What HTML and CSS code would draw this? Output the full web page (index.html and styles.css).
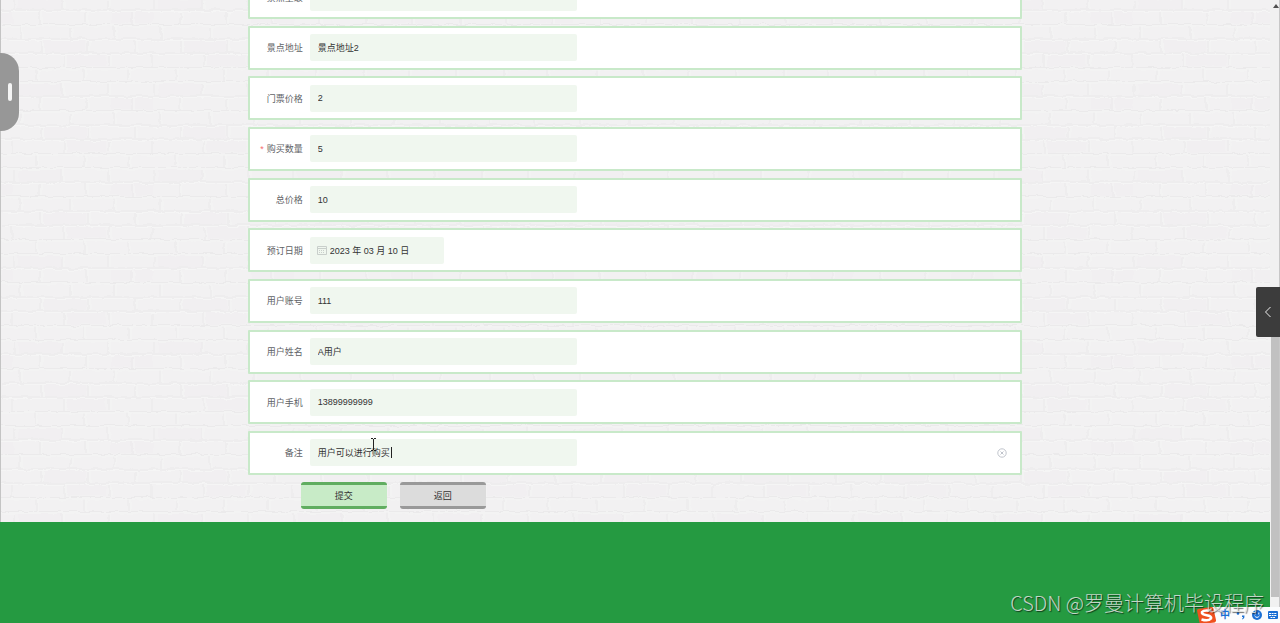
FILE: index.html
```
<!DOCTYPE html>
<html lang="zh-CN">
<head>
    <meta charset="UTF-8">
    <title>景点预订</title>
    <link rel="stylesheet" href="styles.css">
</head>
<body>
    <svg class="wall" aria-hidden="true">
        <defs>
            <filter id="rough" x="0" y="0" width="100%" height="100%">
                <feTurbulence type="fractalNoise" baseFrequency="0.09" numOctaves="3" seed="4" result="noise"/>
                <feDisplacementMap in="SourceGraphic" in2="noise" scale="5"/>
            </filter>
            <pattern id="bricks" width="140" height="86" patternUnits="userSpaceOnUse" patternTransform="translate(15 -4)">
                <rect width="140" height="86" fill="#f2f1f2"/>
                <path fill="#f1eff1" d="M2 2h44v11h-44zM95 16h42v11h-42zM28 45h42v11h-42zM50 59h40v11h-40z"/>
                <path fill="none" stroke="#ebeaeb" d="M0 14h140M0 28.500h140M0 43h140M0 57h140M0 71.500h140M0 85.500h140M46 2v11M92 1v12M138 2v11M24 16v12M70 16v11M116 16v12M4 30v12M54 31v11M98 30v12M25 45v11M72 44v12M119 45v11M48 59v12M93 59v11M136 59v12M20 73v11M68 73v12M112 73v11"/>
                <path fill="none" stroke="#f5f5f5" d="M0 15.500h140M0 30h140M0 44.500h140M0 58.500h140M0 73h140M0 1h140M48 2v11M94 1v12M26 16v12M72 16v11M118 16v12M6 30v12M56 31v11M100 30v12M27 45v11M74 44v12M121 45v11M50 59v12M95 59v11M22 73v11M70 73v12M114 73v11"/>
            </pattern>
        </defs>
        <rect width="100%" height="100%" fill="url(#bricks)" filter="url(#rough)"/>
    </svg>

    <main class="page">
        <form class="order-form">
            <div class="rows">
                <div class="row">
                    <label for="level">景点星级</label>
                    <input type="text" id="level" value="A">
                </div>
                <div class="row">
                    <label for="address">景点地址</label>
                    <input type="text" id="address" value="景点地址2">
                </div>
                <div class="row">
                    <label for="price">门票价格</label>
                    <input type="text" id="price" value="2">
                </div>
                <div class="row">
                    <label for="count"><span class="required">*</span>购买数量</label>
                    <input type="text" id="count" value="5">
                </div>
                <div class="row">
                    <label for="total">总价格</label>
                    <input type="text" id="total" value="10">
                </div>
                <div class="row">
                    <label for="date">预订日期</label>
                    <div class="date-box">
                        <svg class="calendar" viewBox="0 0 10 10" fill="none" stroke="#c9cfcb">
                            <path d="M.5 1.500h9v8h-9zM.5 3.500h9"/>
                            <path d="M2 5.500h6M2 7.500h6" stroke-dasharray="1 1"/>
                        </svg>
                        <input type="text" id="date" value="2023 年 03 月 10 日">
                    </div>
                </div>
                <div class="row">
                    <label for="account">用户账号</label>
                    <input type="text" id="account" value="111">
                </div>
                <div class="row">
                    <label for="name">用户姓名</label>
                    <input type="text" id="name" value="A用户">
                </div>
                <div class="row">
                    <label for="phone">用户手机</label>
                    <input type="text" id="phone" value="13899999999">
                </div>
                <div class="row">
                    <label for="remark">备注</label>
                    <div class="remark-box">
                        <input type="text" id="remark" value="用户可以进行购买">
                        <span class="caret"></span>
                        <svg class="ibeam" viewBox="0 0 7 13" fill="none" stroke="#222">
                            <path d="M1 .5h2M4 .5h2M3.500 1v11M1 12.500h2M4 12.500h2"/>
                        </svg>
                    </div>
                    <button type="button" class="clear" aria-label="清空">
                        <svg viewBox="0 0 10 10" fill="none" stroke="#c0c4cc">
                            <circle cx="5" cy="5" r="4.200"/>
                            <path d="M3.500 3.500l3 3M6.500 3.500l-3 3"/>
                        </svg>
                    </button>
                </div>
            </div>
            <div class="actions">
                <button type="submit" class="btn btn-submit">提交</button>
                <button type="button" class="btn btn-back">返回</button>
            </div>
        </form>
        <footer class="footer"></footer>
    </main>

    <div class="scrollbar">
        <svg class="arrow" viewBox="0 0 6 4"><path d="M3 0l3 4H0z" fill="#505050"/></svg>
        <div class="thumb"></div>
    </div>

    <div class="side-handle"><span></span></div>
    <button type="button" class="drawer" aria-label="展开">
        <svg viewBox="0 0 8 12" fill="none" stroke="#eee"><path d="M6.500 1L1.500 6l5 5"/></svg>
    </button>

    <div class="ime">
        <svg class="sogou" viewBox="0 0 20 17">
            <path d="M1 3.500Q1 2 3 1.700L15 0q2-.2 2.400 1.500L20 13q.2 2-1.500 2.500L6 17q-2 .2-2.500-1.500z" fill="#f0501e"/>
            <path d="M15.500 4Q8 2.500 6 5q-.8 2.500 4.500 3.200Q16 9 15 11.500 12.500 14.500 5.500 12.500" fill="none" stroke="#fff" stroke-width="2.600"/>
        </svg>
        <span class="ime-lang">中</span>
        <svg class="ime-icon" viewBox="0 0 10 10" fill="#1a6fd4">
            <circle cx="2" cy="3.500" r="1.300"/>
            <path d="M6 5.500h2.500q.5 2.500-2 4l-.5-.7q1.200-.8 1-1.800h-1z"/>
        </svg>
        <svg class="ime-icon" viewBox="0 0 10 10">
            <circle cx="5" cy="5" r="5" fill="#1a6fd4"/>
            <path d="M3.200 2.500v2M6.800 2.500v2M2.500 5.800q2.500 3.200 5 0" fill="none" stroke="#fff"/>
        </svg>
        <svg class="ime-icon" viewBox="0 0 10 10">
            <rect y="1" width="10" height="8" rx="1" fill="#1a6fd4"/>
            <path d="M1 3.500h8M1 5.500h8M2.500 7.500h5" stroke="#fff" stroke-dasharray="2 .6"/>
        </svg>
    </div>
    <div class="watermark">CSDN @罗曼计算机毕设程序</div>
</body>
</html>
```
FILE: styles.css
```
* {
    box-sizing: border-box;
}
body {
    margin: 0;
    height: 100vh;
    display: flex;
    overflow: hidden;
    position: relative;
    background: #f2f1f2;
    font-family: "Liberation Sans", "Noto Sans CJK SC", sans-serif;
    font-size: 9px;
}
.wall {
    position: absolute;
    top: 0;
    left: 0;
    width: 100%;
    height: 100%;
    z-index: -1;
    border-left: 1px solid #c4c4c4;
}
.page {
    flex: 1;
    display: flex;
    flex-direction: column;
    min-width: 0;
}
.order-form {
    width: 61%;
    margin: -25px auto 0;
}
.rows {
    display: flex;
    flex-direction: column;
    justify-content: space-between;
    min-height: 500px;
}
.row {
    display: flex;
    align-items: center;
    height: 44px;
    background: #fff;
    border: 2px solid #c8e9c9;
    border-radius: 1px;
}
label {
    width: 60px;
    padding-right: 7px;
    text-align: right;
    color: #606266;
    white-space: nowrap;
}
.required {
    color: #f56c6c;
    margin-right: 3px;
}
input {
    width: 267px;
    height: 27px;
    padding: 0 8px;
    border: none;
    border-radius: 2px;
    outline: none;
    background: #f0f7ef;
    color: #333;
    font: inherit;
}
.date-box,
.remark-box {
    position: relative;
}
.date-box input {
    width: 134px;
    padding: 0 8px 0 20px;
}
.calendar {
    position: absolute;
    top: 8px;
    left: 7px;
    width: 10px;
    height: 10px;
}
.caret {
    position: absolute;
    top: 8px;
    left: 81px;
    width: 1px;
    height: 11px;
    background: #222;
}
.ibeam {
    position: absolute;
    top: -1px;
    left: 60px;
    width: 7px;
    height: 13px;
}
.clear {
    margin-left: auto;
    margin-right: 13px;
    width: 10px;
    height: 10px;
    padding: 0;
    border: none;
    background: none;
}
.clear svg {
    display: block;
}
.actions {
    display: flex;
    gap: 13px;
    padding: 7px 0 13px 53px;
}
.btn {
    width: 86px;
    height: 27px;
    padding: 0;
    border: none;
    border-radius: 3px;
    color: #333;
    font: inherit;
}
.btn-submit {
    background: #c8ebc7;
    border-top: 3px solid #60ad60;
    border-bottom: 3px solid #60ad60;
}
.btn-back {
    background: #dcdcdc;
    border-top: 3px solid #999;
    border-bottom: 3px solid #999;
}
.footer {
    flex: 1;
    background: #259a41;
}
.scrollbar {
    display: flex;
    flex-direction: column;
    align-items: flex-end;
    width: 10px;
    padding: 4px 0 26px 1px;
    background: #f1f1f1;
    border-right: 1px solid #c8c8c8;
}
.arrow {
    width: 6px;
    height: 4px;
}
.thumb {
    width: 100%;
    height: 294px;
    margin-top: auto;
    background: #c1c1c1;
}
.side-handle {
    position: absolute;
    top: 53px;
    left: 0;
    width: 19px;
    height: 78px;
    border-radius: 0 18px 18px 0;
    background: #979797;
    display: flex;
    align-items: center;
    justify-content: flex-end;
    padding-right: 7px;
}
.side-handle span {
    width: 4px;
    height: 18px;
    border-radius: 2px;
    background: #f4f4f4;
}
.drawer {
    position: absolute;
    top: 287px;
    right: 0;
    width: 24px;
    height: 50px;
    padding: 0;
    border: none;
    border-radius: 2px 0 0 2px;
    background: #3c3c3c;
    display: flex;
    align-items: center;
    justify-content: center;
}
.drawer svg {
    width: 8px;
    height: 12px;
}
.ime {
    position: absolute;
    right: 0;
    bottom: 0;
    height: 16px;
    padding-right: 2px;
    display: flex;
    align-items: center;
    gap: 6px;
    background: linear-gradient(to right, transparent 14px, #fbfcfd 14px);
}
.sogou {
    width: 20px;
    height: 17px;
    margin-right: -2px;
}
.ime-lang {
    color: #1a6fd4;
    font-size: 10px;
    font-weight: bold;
    line-height: 16px;
}
.ime-icon {
    width: 10px;
    height: 10px;
}
.watermark {
    position: absolute;
    right: 16px;
    bottom: 5px;
    font-family: "Noto Sans CJK SC", sans-serif;
    font-size: 20px;
    font-weight: 300;
    line-height: 30px;
    color: rgba(225, 230, 225, 0.85);
    text-shadow: 1px 1px 1px rgba(0, 0, 0, 0.6);
    white-space: nowrap;
}
```
